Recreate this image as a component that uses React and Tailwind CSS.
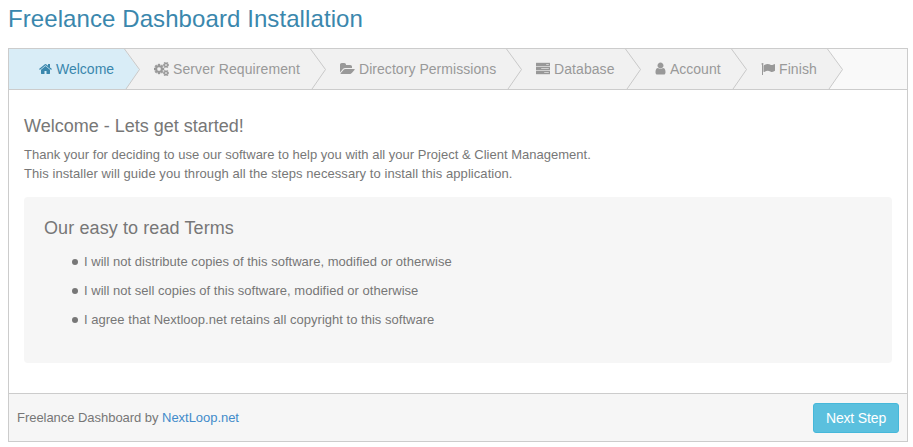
import React from 'react';

const SMALL_COG =
  'v140q0 16-149 31-12 27-30 52 51 113 51 138 0 4-4 7-122 71-124 71-8 0-46-47t-52-68q-20 2-30 2t-30-2q-14 21-52 68t-46 47q-2 0-124-71-4-3-4-7 0-25 51-138-18-25-30-52-149-15-149-31v-140q0-16 149-31 13-29 30-52-51-113-51-138 0-4 4-7 4-2 35-20t59-34 30-16q8 0 46 46.5t52 67.5q20-2 30-2t30 2q51-71 92-112l6-2q4 0 124 70 4 3 4 7 0 25-51 138 17 23 30 52 149 15 149 31z';

const ICONS = {
  home: {
    box: '0 0 1664 1792',
    d: 'M1408 992v480q0 26-19 45t-45 19h-384v-384h-256v384h-384q-26 0-45-19t-19-45v-480q0-1 .5-3t.5-3l575-474 575 474q1 2 1 6zm223-69l-62 74q-8 9-21 11h-3q-13 0-21-7l-692-577-692 577q-12 8-24 7-13-2-21-11l-62-74q-8-10-7-23.5t11-21.5l719-599q32-26 76-26t76 26l244 204v-195q0-14 9-23t23-9h192q14 0 23 9t9 23v408l219 182q10 8 11 21.5t-7 23.5z',
  },
  cogs: {
    box: '0 0 1920 1792',
    d:
      'M896 896q0-106-75-181t-181-75-181 75-75 181 75 181 181 75 181-75 75-181zm768 512q0-52-38-90t-90-38-90 38-38 90q0 53 37.5 90.5t90.5 37.5 90.5-37.5 37.5-90.5zm0-1024q0-52-38-90t-90-38-90 38-38 90q0 53 37.5 90.5t90.5 37.5 90.5-37.5 37.5-90.5zm-384 421v185q0 10-7 19.5t-16 10.5l-155 24q-11 35-32 76 34 48 90 115 7 11 7 20 0 12-7 19-23 30-82.5 89.5t-78.5 59.5q-11 0-21-7l-115-90q-37 19-77 31-11 108-23 155-7 24-30 24h-186q-11 0-20-7.5t-10-17.5l-23-153q-34-10-75-31l-118 89q-7 7-20 7-11 0-21-8-144-133-144-160 0-9 7-19 10-14 41-53t47-61q-23-44-35-82l-152-24q-10-1-17-9.5t-7-19.5v-185q0-10 7-19.5t16-10.5l155-24q11-35 32-76-34-48-90-115-7-11-7-20 0-12 7-20 22-30 82-89t79-59q11 0 21 7l115 90q34-18 77-32 11-108 23-154 7-24 30-24h186q11 0 20 7.5t10 17.5l23 153q34 10 75 31l118-89q8-7 20-7 11 0 21 8 144 133 144 160 0 8-7 19-12 16-42 54t-45 60q23 48 34 82l152 23q10 2 17 10.500t7 19.500zM1920 1338' +
      SMALL_COG +
      'M1920 314' +
      SMALL_COG,
  },
  folder: {
    box: '0 0 1920 1792',
    d: 'M1879 952q0 31-31 66l-336 396q-43 51-120.5 86.5t-143.5 35.5h-1088q-34 0-60.5-13t-26.5-43q0-31 31-66l336-396q43-51 120.5-86.5t143.5-35.5h1088q34 0 60.5 13t26.5 43zm-343-344v160h-832q-94 0-197 47.5t-164 119.5l-337 396-5 6q0-4-.5-12.5t-.5-12.5v-960q0-92 66-158t158-66h320q92 0 158 66t66 158v32h544q92 0 158 66t66 158z',
  },
  tasks: {
    box: '0 0 1792 1792',
    d: 'M1024 1408h640v-128h-640v128zm-384-512h1024v-128h-1024v128zm640-512h384v-128h-384v128zm512 832v256q0 26-19 45t-45 19h-1664q-26 0-45-19t-19-45v-256q0-26 19-45t45-19h1664q26 0 45 19t19 45zm0-512v256q0 26-19 45t-45 19h-1664q-26 0-45-19t-19-45v-256q0-26 19-45t45-19h1664q26 0 45 19t19 45zm0-512v256q0 26-19 45t-45 19h-1664q-26 0-45-19t-19-45v-256q0-26 19-45t45-19h1664q26 0 45 19t19 45z',
  },
  user: {
    box: '192 64 1408 1792',
    d: 'M1536 1399q0 109-62.5 187t-150.5 78h-854q-88 0-150.5-78t-62.5-187q0-85 8.5-160.5t31.5-152 58.5-131 94-89 134.5-34.5q131 128 313 128t313-128q76 0 134.5 34.5t94 89 58.5 131 31.5 152 8.5 160.5zm-256-887q0 159-112.5 271.5t-271.5 112.5-271.5-112.5-112.5-271.5 112.5-271.5 271.5-112.5 271.5 112.5 112.5 271.5z',
  },
  flag: {
    box: '0 0 1792 1792',
    d: 'M320 256q0 72-64 110v1266q0 13-9.500 22.500t-22.500 9.500h-64q-13 0-22.500-9.500t-9.500-22.500v-1266q-64-38-64-110 0-53 37.500-90.500t90.500-37.500 90.500 37.500 37.500 90.500zm1472 64v763q0 25-12.500 38.500t-39.500 27.500q-215 116-369 116-61 0-123.500-22t-108.500-48-115.500-48-142.500-22q-192 0-464 146-17 9-33 9-26 0-45-19t-19-45v-742q0-32 31-55 21-14 79-43 236-120 421-120 107 0 200 29t219 88q38 19 88 19 54 0 117.500-21t110-47 88-47 54.500-21q26 0 45 19t19 45z',
  },
};

const STEPS = [
  { label: 'Welcome', icon: 'home', width: 'w-[116px] pl-[30px]', iconWidth: 'w-[13px]', active: true },
  { label: 'Server Requirement', icon: 'cogs', width: 'w-[186px] pl-[29px] tracking-[0.09px]', iconWidth: 'w-[15px]', heavy: true },
  { label: 'Directory Permissions', icon: 'folder', width: 'w-[196px] pl-[29px] tracking-[0.05px]', iconWidth: 'w-[15px]' },
  { label: 'Database', icon: 'tasks', width: 'w-[119px] pl-[29px] tracking-[0.08px]', iconWidth: 'w-[14px]', heavy: true },
  { label: 'Account', icon: 'user', width: 'w-[106px] pl-[29px]', iconWidth: 'w-[11px]' },
  { label: 'Finish', icon: 'flag', width: 'w-[96px] pl-[29px] tracking-[0.1px]', iconWidth: 'w-[14px]' },
];

const TERMS = [
  'I will not distribute copies of this software, modified or otherwise',
  'I will not sell copies of this software, modified or otherwise',
  'I agree that Nextloop.net retains all copyright to this software',
];

function Icon({ name, className, heavy }) {
  const { box, d } = ICONS[name];
  return (
    <svg viewBox={box} className={`h-[14px] shrink-0 ${className}`} fill="currentColor" aria-hidden="true">
      <path d={d} stroke="currentColor" strokeWidth={heavy ? 50 : 0} />
    </svg>
  );
}

function Step({ label, icon, width, iconWidth, active, heavy }) {
  return (
    <li
      className={`relative flex h-10 shrink-0 items-center gap-1 text-sm whitespace-nowrap ${width} ${
        active ? 'bg-[#d9edf7] text-[#3a87ad]' : 'bg-[#f1f1f1] text-[#999999]'
      }`}
    >
      <Icon name={icon} className={iconWidth} heavy={heavy} />
      <span>{label}</span>
      <svg className="absolute top-0 -right-4 z-10 h-10 w-[17px]" viewBox="0 0 17 40" aria-hidden="true">
        <path d="M0 0L15 20.500L2 40H0Z" fill={active ? '#d9edf7' : '#f1f1f1'} />
        <path d="M0.500 0L15.500 20.500L2 40" fill="none" stroke="#c4c4c4" strokeWidth="0.9" />
      </svg>
    </li>
  );
}

export default function App() {
  return (
    <div className="h-[447px] w-[913px] overflow-hidden bg-white px-2 pt-1 font-['Liberation_Sans',Arial,sans-serif] text-[13px] text-[#777777]">
      <h1 className="h-11 text-2xl leading-[30px] tracking-[0.085px] text-[#3a87ad]">Freelance Dashboard Installation</h1>
      <div className="flex h-[394px] w-[900px] flex-col border border-[#cccccc]">
        <ol className="flex h-[41px] shrink-0 border-b border-[#cccccc] bg-[#f9f9f9]">
          {STEPS.map((step) => (
            <Step key={step.label} {...step} />
          ))}
        </ol>
        <main className="flex-1 px-[15px] pt-[25px]">
          <h2 className="text-lg leading-[22px]">Welcome - Lets get started!</h2>
          <p className="mt-[8px] leading-[19px] tracking-[0.01px]">
            Thank your for deciding to use our software to help you with all your Project &amp; Client Management.
            <br />
            <span className="tracking-[0.065px]">
              This installer will guide you through all the steps necessary to install this application.
            </span>
          </p>
          <section className="mt-[14px] h-[166px] rounded bg-[#f6f6f6] px-5 pt-5">
            <h2 className="text-lg leading-[22px] tracking-[0.1px]">Our easy to read Terms</h2>
            <ul className="mt-[13px] flex flex-col gap-[10px] pl-7">
              {TERMS.map((term) => (
                <li key={term} className="flex items-center gap-[6px] leading-[19px] tracking-[0.02px]">
                  <span className="size-[6px] rounded-full bg-[#777777]" />
                  {term}
                </li>
              ))}
            </ul>
          </section>
        </main>
        <footer className="flex h-12 shrink-0 items-start justify-between border-t border-[#cccccc] bg-[#f6f6f6] px-2 pt-[9px]">
          <p className="leading-[30px] tracking-[-0.04px]">
            Freelance Dashboard by <a className="text-[#428bca]">NextLoop.net</a>
          </p>
          <button className="h-[30px] w-[86px] rounded-[3px] border border-[#46b8da] bg-[#5bc0de] text-sm tracking-[-0.15px] text-white">
            Next Step
          </button>
        </footer>
      </div>
    </div>
  );
}
